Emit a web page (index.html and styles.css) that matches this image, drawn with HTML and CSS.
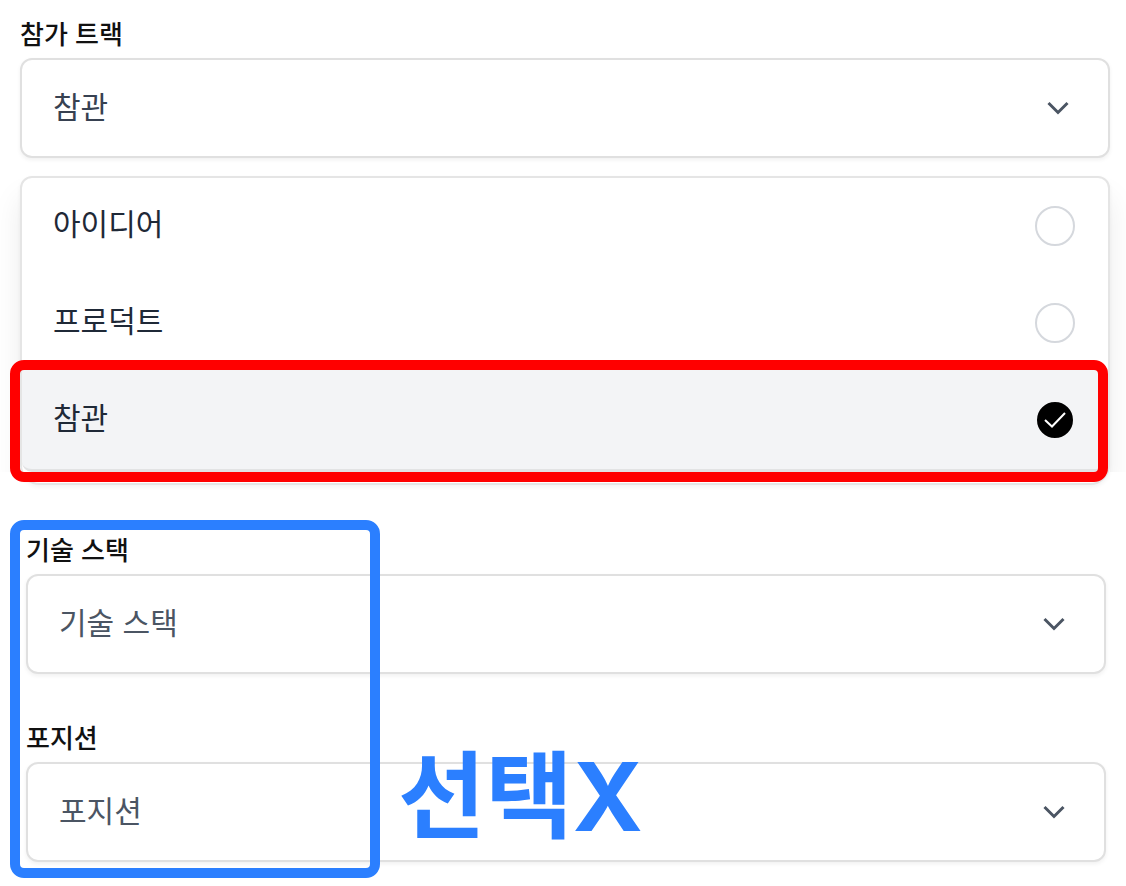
FILE: index.html
```html
<!DOCTYPE html>
<html lang="ko">

<head>
    <meta charset="UTF-8">
    <meta name="viewport" content="width=device-width, initial-scale=1.0">
    <title>참가 트랙</title>
    <link rel="stylesheet" href="styles.css">
</head>

<body>
    <form class="track">
        <label class="label" for="track">참가 트랙</label>
        <div class="select-box">
            <select class="select" id="track">
                <option>아이디어</option>
                <option>프로덕트</option>
                <option selected>참관</option>
            </select>
            <svg class="arrow" viewBox="0 0 24 16" aria-hidden="true"><path d="M2.500 3L12 12.500L21.500 3" /></svg>
        </div>

        <div class="menu">
            <label class="item">
                <span class="item-text">아이디어</span>
                <input class="radio" type="radio" name="item">
            </label>
            <label class="item">
                <span class="item-text">프로덕트</span>
                <input class="radio" type="radio" name="item">
            </label>
            <label class="item active">
                <span class="item-text">참관</span>
                <span class="check-box">
                    <input class="radio" type="radio" name="item" checked>
                    <svg class="check" viewBox="0 0 40 40" aria-hidden="true"><path d="M10 20L17 26.500L30 13" /></svg>
                </span>
            </label>
        </div>
    </form>

    <!-- 참관 선택 시 비활성 영역 -->
    <form class="disabled-area">
        <div class="field">
            <label class="label" for="stack">기술 스택</label>
            <div class="select-box">
                <select class="select placeholder" id="stack">
                    <option>기술 스택</option>
                </select>
                <svg class="arrow" viewBox="0 0 24 16" aria-hidden="true"><path d="M2.500 3L12 12.500L21.500 3" /></svg>
            </div>
        </div>
        <div class="field">
            <label class="label" for="position">포지션</label>
            <div class="select-box">
                <select class="select placeholder" id="position">
                    <option>포지션</option>
                </select>
                <svg class="arrow" viewBox="0 0 24 16" aria-hidden="true"><path d="M2.500 3L12 12.500L21.500 3" /></svg>
            </div>
        </div>
        <div class="blue-frame"></div>
        <strong class="note">선택X</strong>
    </form>
</body>

</html>
```

FILE: styles.css
```css
* {
    box-sizing: border-box;
}

body {
    margin: 0;
    padding: 17px 0 24px;
    background-color: #fff;
    font-family: "Noto Sans CJK KR", sans-serif;
    color: #111;
}

.track {
    padding: 0 16px 0 20px;
}

.label {
    display: block;
    margin-bottom: 9px;
    font-size: 26px;
    font-weight: 500;
    line-height: 32px;
}

.select-box {
    position: relative;
}

.select {
    display: block;
    width: 100%;
    height: 100px;
    padding: 0 80px 6px 31px;
    border: 2px solid #e0e0e0;
    border-radius: 12px;
    background-color: #fff;
    box-shadow: 0 2px 4px rgba(0, 0, 0, 0.06);
    color: #374151;
    font-family: inherit;
    font-size: 30px;
    appearance: none;
    cursor: pointer;
}

.select.placeholder {
    color: #4b5563;
}

.arrow {
    position: absolute;
    top: 42px;
    right: 40px;
    width: 24px;
    height: 16px;
    fill: none;
    stroke: #4b5563;
    stroke-width: 3;
    pointer-events: none;
}

/* menu */
.menu {
    position: relative;
    z-index: 0;
    margin-top: 18px;
    padding-bottom: 11px;
    border: 2px solid #e5e5e5;
    border-radius: 12px 12px 20px 20px;
    background-color: #fff;
    box-shadow: 0 2px 4px rgba(0, 0, 0, 0.05);
}

.menu::before {
    content: "";
    position: absolute;
    z-index: -1;
    inset: 0 -2px 11px;
    box-shadow: 0 20px 28px rgba(0, 0, 0, 0.08);
    clip-path: inset(0 -24px);
}

.item {
    position: relative;
    display: flex;
    align-items: center;
    justify-content: space-between;
    padding: 23px 33px 25px 31px;
    color: #1f2937;
    font-size: 30px;
    line-height: 43px;
    cursor: pointer;
}

.item-text {
    padding-bottom: 6px;
}

.item.active {
    border-bottom: 3px solid #e2e3e4;
    border-radius: 0 0 10px 10px;
    background-color: #f3f4f6;
    box-shadow: 0 -2px #f3f4f6;
}

.item.active::after {
    content: "";
    position: absolute;
    inset: -12px 0 -13px -12px;
    border: 10px solid #f00;
    border-radius: 14px;
}

.radio {
    display: block;
    width: 40px;
    height: 40px;
    margin: 0;
    border: 2px solid #d5d8dd;
    border-radius: 50%;
    background-color: #fff;
    appearance: none;
}

.radio:checked {
    border-color: #f3f4f6;
    background-color: #000;
}

.check-box {
    position: relative;
}

.check {
    position: absolute;
    inset: 0;
    fill: none;
    stroke: #fff;
    stroke-width: 2;
}

/* disabled */
.disabled-area {
    position: relative;
    display: flex;
    flex-direction: column;
    gap: 47px;
    margin-top: 48px;
    padding: 0 20px 0 26px;
}

.blue-frame {
    position: absolute;
    inset: -13px auto -16px 10px;
    width: 370px;
    border: 10px solid #2b7fff;
    border-radius: 14px;
    pointer-events: none;
}

.note {
    position: absolute;
    left: 398px;
    bottom: 17px;
    color: #2b7fff;
    font-family: Inter, "Noto Sans CJK KR", sans-serif;
    font-size: 95px;
    font-weight: 700;
    line-height: 96px;
}
```
